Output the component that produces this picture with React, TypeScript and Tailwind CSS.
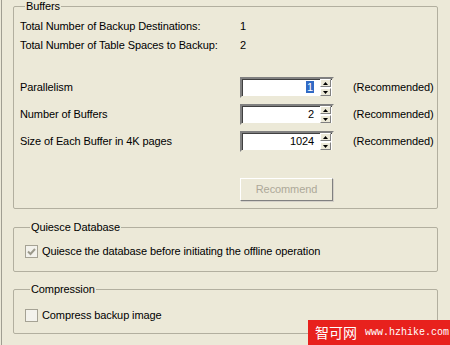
import React from "react";

const font = { fontFamily: '"Liberation Sans", Arial, sans-serif' };

function Spinner() {
  return (
    <div className="flex flex-col w-[11px] h-[17px] gap-px">
      {["up", "down"].map((d) => (
        <div
          key={d}
          className="flex-1 flex items-center justify-center bg-[#ece9d8] border border-t-white border-l-white border-r-[#808080] border-b-[#808080]"
        >
          <svg width="5" height="3" viewBox="0 0 5 3">
            {d === "up" ? <path d="M2.5 0 L5 3 L0 3 Z" fill="#000" /> : <path d="M0 0 L5 0 L2.5 3 Z" fill="#000" />}
          </svg>
        </div>
      ))}
    </div>
  );
}

function SpinInput({ value, selected }: { value: string; selected?: boolean }) {
  return (
    <div className="w-[94px] h-[21px] flex items-center bg-white border-2 border-t-[#808080] border-l-[#808080] border-r-[#ece9d8] border-b-[#ece9d8] shadow-[inset_1px_1px_0_#404040]">
      <div className="flex-1 text-right pr-[6px] leading-[13px]">
        {selected ? <span className="bg-[#316ac5] text-white px-px">{value}</span> : value}
      </div>
      <div className="pr-px">
        <Spinner />
      </div>
    </div>
  );
}

function Checkbox({ checked }: { checked?: boolean }) {
  return (
    <div className="w-[13px] h-[13px] border border-[#a5a294] bg-[#f3f2ec] flex items-center justify-center shrink-0">
      {checked && (
        <svg width="9" height="8" viewBox="0 0 9 8">
          <path d="M1 3.5 L3.5 6 L8 1" stroke="#9c9a8c" strokeWidth="2" fill="none" />
        </svg>
      )}
    </div>
  );
}

export default function App() {
  const spinRows = [
    { label: "Parallelism", value: "1", selected: true },
    { label: "Number of Buffers", value: "2" },
    { label: "Size of Each Buffer in 4K pages", value: "1024" },
  ];

  return (
    <div
      className="relative w-[450px] h-[345px] overflow-hidden bg-[#ece9d8] text-[11px] tracking-[-0.1px] text-black"
      style={font}
    >
      <div className="absolute left-px top-0 bottom-0 w-px bg-[#a09e92]" />

      <div className="pl-[13px] pr-[12px] flex flex-col">
        {/* Buffers */}
        <fieldset className="border border-[#b2af9f] rounded-[2px] pl-[6px] pt-[4px] pb-[7px]">
          <legend className="ml-[5px] px-px leading-[13px]">Buffers</legend>
          <div className="grid grid-cols-[220px_1fr] leading-[19px]">
            <span>Total Number of Backup Destinations:</span>
            <span>1</span>
            <span>Total Number of Table Spaces to Backup:</span>
            <span>2</span>
          </div>

          <div className="mt-[22px] flex flex-col gap-[6px]">
            {spinRows.map((r) => (
              <div key={r.label} className="flex items-center">
                <span className="w-[220px]">{r.label}</span>
                <SpinInput value={r.value} selected={r.selected} />
                <span className="ml-[19px]">(Recommended)</span>
              </div>
            ))}
          </div>

          <div className="mt-[26px] pl-[220px]">
            <button className="w-[93px] h-[23px] bg-[#ece9d8] text-[#aca899] border border-t-white border-l-white border-r-[#808080] border-b-[#808080] shadow-[1px_1px_0_#d4d0c8]">
              Recommend
            </button>
          </div>
        </fieldset>

        {/* Quiesce Database */}
        <fieldset className="mt-[12px] border border-[#b2af9f] rounded-[2px] pl-[11px] pt-[11px] pb-[13px]">
          <legend className="ml-[5px] px-px leading-[13px]">Quiesce Database</legend>
          <label className="flex items-center gap-[4px] leading-[13px]">
            <Checkbox checked />
            <span>Quiesce the database before initiating the offline operation</span>
          </label>
        </fieldset>

        {/* Compression */}
        <fieldset className="mt-[11px] border border-[#b2af9f] rounded-[2px] pl-[11px] pt-[13px] pb-[11px]">
          <legend className="ml-[5px] px-px leading-[13px]">Compression</legend>
          <label className="flex items-center gap-[4px] leading-[13px]">
            <Checkbox />
            <span>Compress backup image</span>
          </label>
        </fieldset>
      </div>

      {/* watermark */}
      <div className="absolute left-[308px] top-[320px] w-[142px] h-[25px] bg-[#e8211d] text-white flex items-center pl-[7px] gap-[8px] tracking-normal">
        <span className="text-[14px]" style={{ fontFamily: '"Noto Sans CJK SC", sans-serif' }}>
          智可网
        </span>
        <span className="text-[10px]" style={{ fontFamily: '"Liberation Mono", monospace' }}>
          www.hzhike.com
        </span>
      </div>
    </div>
  );
}
